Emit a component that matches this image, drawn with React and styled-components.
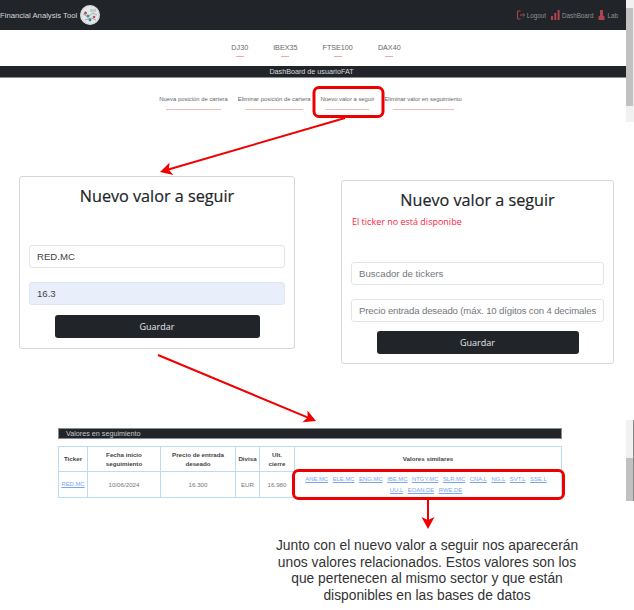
import React from 'react';
import styled, { createGlobalStyle } from 'styled-components';

const GlobalStyle = createGlobalStyle`
  html, body {
    margin: 0;
    padding: 0;
    background: #fff;
    font-family: "Liberation Sans", Arial, sans-serif;
    color: #212529;
    overflow: hidden;
  }
  * { box-sizing: border-box; }
`;

const indices = ['DJ30', 'IBEX35', 'FTSE100', 'DAX40'];
const tabs = [
  { label: 'Nueva posición de cartera', width: 55 },
  { label: 'Eliminar posición de cartera', width: 58 },
  { label: 'Nuevo valor a seguir', width: 44 },
  { label: 'Eliminar valor en seguimiento', width: 61 },
];
const similares = ['ANE.MC', 'ELE.MC', 'ENG.MC', 'IBE.MC', 'NTGY.MC', 'SLR.MC', 'CNA.L', 'NG.L', 'SVT.L', 'SSE.L', 'UU.L', 'EOAN.DE', 'RWE.DE'];

const Logo = () => (
  <svg width="20" height="20" viewBox="0 0 20 20">
    <circle cx="10" cy="10" r="10" fill="#e4e7e8" />
    <circle cx="10" cy="10" r="9" fill="none" stroke="#aab2b5" strokeWidth="0.6" strokeDasharray="1.5 1" />
    <path d="M3 9l5 3 5-4 4 2M5 15l6-2 5 2" stroke="#8a9aa0" strokeWidth="0.8" fill="none" />
    <circle cx="5.5" cy="8" r="1.5" fill="#b5505a" />
    <circle cx="8" cy="11" r="1.5" fill="#4a8fa8" />
    <circle cx="14" cy="12" r="1.3" fill="#b5505a" />
    <circle cx="10" cy="15" r="1.4" fill="#2f8f8a" />
    <path d="M10 4h6v3h-6z" fill="#c2c9cc" />
  </svg>
);

const LogoutIcon = () => (
  <svg width="8" height="10" viewBox="0 0 8 10" fill="none" stroke="#b0444c" strokeWidth="1">
    <path d="M3.5 1H.5v8h3M3 5h4.5M6 3.3L7.6 5 6 6.7" />
  </svg>
);

const ChartIcon = () => (
  <svg width="9" height="10" viewBox="0 0 9 10" fill="#b0444c">
    <path d="M0 6h2v4H0zM3.3 3h2v7h-2zM6.6 0h2v10h-2z" />
  </svg>
);

const LabIcon = () => (
  <svg width="7" height="10" viewBox="0 0 7 10" fill="#b0444c">
    <path d="M2 0h3v5.5H2zM.5 7c0-1 1-1.5 3-1.5s3 .5 3 1.5v3h-6z" />
  </svg>
);

const Page = styled.div`
  position: relative;
  width: 634px;
  height: 610px;
  overflow: hidden;
`;

const Navbar = styled.header`
  height: 30px;
  background: #212529;
  display: flex;
  align-items: center;
  justify-content: space-between;
  padding: 0 16px 0 0;
`;

const Brand = styled.div`
  display: flex;
  align-items: center;
  gap: 3px;
  font-size: 7.7px;
  color: #d5d7d9;
`;

const NavLinks = styled.nav`
  display: flex;
  gap: 5px;
`;

const NavLink = styled.span`
  display: flex;
  align-items: center;
  gap: 2px;
  font-size: 6.3px;
  color: #8f9396;
`;

const IndexRow = styled.div`
  height: 36px;
  display: flex;
  justify-content: center;
  gap: 25px;
  padding: 13px 2px 0 0;
`;

const IndexItem = styled.div`
  display: flex;
  flex-direction: column;
  align-items: center;
  gap: 4px;
  font-size: 7.2px;
  line-height: 9px;
  color: #666;
`;

const Underline = styled.span`
  display: block;
  width: ${props => props.$wide}px;
  height: 1px;
  background: ${props => props.$colour};
`;

const DashBar = styled.div`
  height: 12px;
  background: #212529;
  border-bottom: 1px solid #8b8e91;
  color: #dcdddd;
  font-size: 7.2px;
  line-height: 11px;
  text-align: center;
  padding-right: 11px;
`;

const TabRow = styled.div`
  height: 98px;
  display: flex;
  justify-content: center;
  gap: 10px;
  padding: 18px 13px 0 0;
`;

const Tab = styled.div`
  display: flex;
  flex-direction: column;
  align-items: center;
  gap: 6px;
  font-size: 5.9px;
  line-height: 7px;
  color: #666;
`;

const Forms = styled.section`
  display: flex;
  align-items: flex-start;
  gap: 46px;
  padding-left: 19px;
  height: 252px;
`;

const Card = styled.div`
  width: ${props => props.$wide}px;
  height: ${props => props.$high}px;
  margin-top: ${props => props.$top}px;
  border: 1px solid #d5d7d9;
  border-radius: 3px;
  padding: 0 9px;
  display: flex;
  flex-direction: column;
  align-items: stretch;
`;

const Title = styled.h2`
  margin: 7px 0 0;
  font-family: "Open Sans", "Noto Sans", sans-serif;
  font-size: 16.2px;
  line-height: 24px;
  font-weight: 500;
  -webkit-text-stroke: 0.2px #212529;
  text-align: center;
  color: #212529;
`;

const ErrorText = styled.div`
  height: 14px;
  margin: 3px 0 0 1px;
  font-family: "Open Sans", sans-serif;
  font-size: 9px;
  line-height: 14px;
  color: #ff2244;
`;

const Field = styled.div`
  height: 23px;
  margin-top: ${props => props.$gap}px;
  border: 1px solid ${props => (props.$filled ? '#dfe6f3' : '#e2e4e6')};
  border-radius: 3px;
  background: ${props => (props.$filled ? '#e8effa' : '#fff')};
  padding: 0 7px;
`;

const FieldText = styled.div`
  font-size: 9.6px;
  line-height: 21px;
  letter-spacing: ${props => (props.$tight ? '-0.14px' : '0')};
  color: ${props => (props.$muted ? '#73787d' : '#444')};
  white-space: nowrap;
  overflow: hidden;
`;

const SaveButton = styled.div`
  align-self: center;
  width: ${props => props.$wide}px;
  height: 23px;
  margin-top: ${props => props.$gap}px;
  background: #212529;
  border-radius: 3px;
  color: #e6e7e8;
  font-family: "Open Sans", sans-serif;
  font-size: 9px;
  line-height: 23px;
  text-align: center;
`;

const TableBlock = styled.section`
  width: 504px;
  margin-left: 58px;
`;

const TableHead = styled.div`
  height: 11px;
  background: #212529;
  border: 1px solid #8b8e91;
  color: #c5c7c9;
  font-size: 7.2px;
  line-height: 9px;
  padding-left: 7px;
`;

const Grid = styled.table`
  width: 504px;
  margin-top: 7px;
  border-collapse: collapse;
  table-layout: fixed;
`;

const Th = styled.th`
  border: 1px solid #bcdcf5;
  height: 25px;
  width: ${props => props.$wide}px;
  padding: 0 2px;
  font-size: 6.2px;
  line-height: 9.5px;
  font-weight: 700;
  color: #444;
  text-align: center;
`;

const Td = styled.td`
  border: 1px solid #bcdcf5;
  height: 26px;
  padding: 0 ${props => props.$right || 2}px 0 2px;
  font-size: 6.2px;
  line-height: 9.5px;
  color: #777;
  text-align: center;
`;

const TickerLink = styled.a`
  color: #7aa4ee;
  font-size: 5.9px;
  text-decoration: underline;
  margin: 0 ${props => props.$gap}px;
`;

const Caption = styled.p`
  width: 320px;
  margin: 40px 0 0 267px;
  font-size: 13.8px;
  line-height: 16.7px;
  text-align: center;
  color: #333;
`;

const Overlay = styled.svg`
  position: absolute;
  inset: 0;
  pointer-events: none;
`;

const ScrollBar = styled.div`
  position: absolute;
  right: 0;
  top: ${props => props.$top}px;
  width: 8px;
  height: ${props => props.$high}px;
  background: #f1f1f1;
  border-right: 1px solid ${props => props.$edge};
`;

const ScrollThumb = styled.div`
  width: 100%;
  margin-top: ${props => props.$top}px;
  height: ${props => props.$high}px;
  background: #c1c1c1;
`;

const Arrow = ({ x1, y1, x2, y2 }) => {
  const angle = Math.atan2(y2 - y1, x2 - x1);
  const pt = (len, off) => {
    const bx = x2 - Math.cos(angle) * len;
    const by = y2 - Math.sin(angle) * len;
    return `${bx - Math.sin(angle) * off},${by + Math.cos(angle) * off}`;
  };
  const endX = x2 - Math.cos(angle) * 6;
  const endY = y2 - Math.sin(angle) * 6;
  return (
    <g>
      <line x1={x1} y1={y1} x2={endX} y2={endY} stroke="#f00000" strokeWidth="2" />
      <polygon points={`${x2},${y2} ${pt(12, 6.5)} ${pt(9, 0)} ${pt(12, -6.5)}`} fill="#f00000" />
    </g>
  );
};

export default function App() {
  return (
    <Page>
      <GlobalStyle />
      <Navbar>
        <Brand>Financial Analysis Tool <Logo /></Brand>
        <NavLinks>
          <NavLink><LogoutIcon />Logout</NavLink>
          <NavLink><ChartIcon />DashBoard</NavLink>
          <NavLink><LabIcon />Lab</NavLink>
        </NavLinks>
      </Navbar>
      <IndexRow>
        {indices.map(name => (
          <IndexItem key={name}>
            {name}
            <Underline $wide={8} $colour="#f5a5a5" />
          </IndexItem>
        ))}
      </IndexRow>
      <DashBar>DashBoard de usuarioFAT</DashBar>
      <TabRow>
        {tabs.map(tab => (
          <Tab key={tab.label}>
            {tab.label}
            <Underline $wide={tab.width} $colour="#f3b8b8" />
          </Tab>
        ))}
      </TabRow>
      <Forms>
        <Card $wide={276} $high={173} $top={0}>
          <Title>Nuevo valor a seguir</Title>
          <Field $gap={37}><FieldText>RED.MC</FieldText></Field>
          <Field $gap={14} $filled><FieldText>16.3</FieldText></Field>
          <SaveButton $wide={205} $gap={10}>Guardar</SaveButton>
        </Card>
        <Card $wide={273} $high={184} $top={4}>
          <Title>Nuevo valor a seguir</Title>
          <ErrorText>El ticker no está disponibe</ErrorText>
          <Field $gap={33}><FieldText $muted>Buscador de tickers</FieldText></Field>
          <Field $gap={14}><FieldText $muted $tight>Precio entrada deseado (máx. 10 dígitos con 4 decimales</FieldText></Field>
          <SaveButton $wide={202} $gap={9}>Guardar</SaveButton>
        </Card>
      </Forms>
      <TableBlock>
        <TableHead>Valores en seguimiento</TableHead>
        <Grid>
          <thead>
            <tr>
              <Th $wide={29}>Ticker</Th>
              <Th $wide={73}>Fecha inicio<br />seguimiento</Th>
              <Th $wide={75}>Precio de entrada<br />deseado</Th>
              <Th $wide={24}>Divisa</Th>
              <Th $wide={35}>Ult.<br />cierre</Th>
              <Th>Valores similares</Th>
            </tr>
          </thead>
          <tbody>
            <tr>
              <Td><TickerLink>RED.MC</TickerLink></Td>
              <Td>10/06/2024</Td>
              <Td>16.300</Td>
              <Td>EUR</Td>
              <Td>16.980</Td>
              <Td $right={6}>
                {similares.map(code => (
                  <React.Fragment key={code}>
                    <TickerLink $gap={1.4}>{code}</TickerLink>{' '}
                  </React.Fragment>
                ))}
              </Td>
            </tr>
          </tbody>
        </Grid>
      </TableBlock>
      <Caption>
        Junto con el nuevo valor a seguir nos aparecerán unos valores relacionados. Estos valores son los que pertenecen al mismo sector y que están disponibles en las bases de datos
      </Caption>
      <ScrollBar $top={0} $high={122} $edge="#f1f1f1"><ScrollThumb $top={8} $high={98} /></ScrollBar>
      <ScrollBar $top={420} $high={81} $edge="#888"><ScrollThumb $top={38} $high={43} /></ScrollBar>
      <Overlay width="634" height="610" viewBox="0 0 634 610">
        <rect x="314" y="87.5" width="69" height="29" rx="5" fill="none" stroke="#ee0000" strokeWidth="3" />
        <rect x="293.5" y="470.5" width="270" height="28" rx="5" fill="none" stroke="#ee0000" strokeWidth="3" />
        <Arrow x1={345} y1={118} x2={160} y2={172} />
        <Arrow x1={158} y1={355} x2={316} y2={421} />
        <Arrow x1={428} y1={500} x2={428} y2={529} />
      </Overlay>
    </Page>
  );
}
